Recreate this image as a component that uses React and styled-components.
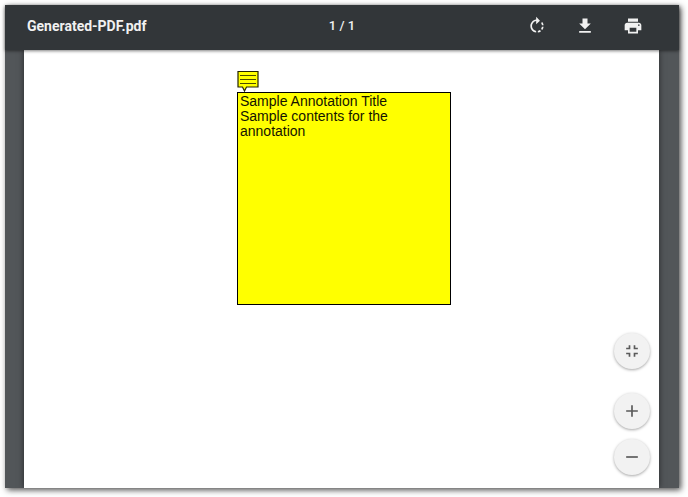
import React from "react";
import styled, { createGlobalStyle } from "styled-components";
import {
  MdRotateRight,
  MdFileDownload,
  MdPrint,
  MdFullscreenExit,
  MdAdd,
  MdRemove,
} from "react-icons/md";

const GlobalStyle = createGlobalStyle`
  *, *::before, *::after { box-sizing: border-box; }
  body {
    margin: 0;
    background: #ffffff;
    font-family: Roboto, "Liberation Sans", sans-serif;
  }
`;

const Viewer = styled.div`
  position: relative;
  display: flex;
  flex-direction: column;
  min-height: calc(100vh - 14px);
  margin: 5px 9px 9px 5px;
  background: #525659;
  box-shadow: 2px 2px 6px rgba(0, 0, 0, 0.7);
`;

const Toolbar = styled.header`
  position: relative;
  z-index: 1;
  display: grid;
  grid-template-columns: 1fr auto 1fr;
  align-items: center;
  height: 45px;
  padding: 0 30px 4px 22px;
  background: #323639;
  color: #f1f1f1;
  box-shadow: 0 1px 3px rgba(0, 0, 0, 0.5);
`;

const FileName = styled.h1`
  margin: 0;
  font-size: 14px;
  line-height: 20px;
  font-weight: 700;
`;

const PageCount = styled.span`
  padding-left: 8px;
  font-size: 13px;
  line-height: 20px;
  font-weight: 500;
`;

const Actions = styled.div`
  display: flex;
  justify-content: flex-end;
  gap: 16px;
`;

const ToolButton = styled.button`
  display: flex;
  align-items: center;
  justify-content: center;
  width: 32px;
  height: 32px;
  padding: 0;
  border: 0;
  background: transparent;
  color: inherit;
  cursor: pointer;
`;

const Body = styled.div`
  flex: 1;
  display: flex;
  flex-direction: column;
  overflow: hidden;
`;

const Page = styled.main`
  flex: 1;
  margin: 0 20px 0 19px;
  padding: 20px 16px 16px 213px;
  background: #ffffff;
  box-shadow: 0 0 6px rgba(0, 0, 0, 0.55);
`;

const NoteIcon = styled.svg`
  display: block;
  width: 22px;
  height: 22px;
`;

const Note = styled.section`
  width: 214px;
  height: 213px;
  padding: 1px 2px;
  border: 1px solid #000000;
  background: #ffff00;
  color: #141400;
  font-family: "Liberation Sans", Arial, sans-serif;
  font-size: 14px;
  line-height: 15px;
`;

const NoteTitle = styled.h2`
  margin: 0;
  font-size: inherit;
  font-weight: 400;
`;

const NoteText = styled.p`
  margin: 0;
  white-space: pre-line;
`;

const ZoomControls = styled.div`
  position: absolute;
  right: 29px;
  bottom: 13px;
  display: flex;
  flex-direction: column;
  gap: 10px;
`;

const RoundButton = styled.button`
  display: flex;
  align-items: center;
  justify-content: center;
  width: 36px;
  height: 36px;
  margin: 0 0 ${({ $apart }) => ($apart ? "14px" : "0")};
  padding: 0;
  border: 0;
  border-radius: 50%;
  background: #f2f2f2;
  color: #5a5a5a;
  box-shadow: 0 1px 3px rgba(0, 0, 0, 0.35);
  cursor: pointer;
`;

export default function App() {
  return (
    <>
      <GlobalStyle />
      <Viewer>
        <Toolbar>
          <FileName>Generated-PDF.pdf</FileName>
          <PageCount>1 / 1</PageCount>
          <Actions>
            <ToolButton type="button" aria-label="Rotate clockwise">
              <MdRotateRight size={20} />
            </ToolButton>
            <ToolButton type="button" aria-label="Download">
              <MdFileDownload size={20} />
            </ToolButton>
            <ToolButton type="button" aria-label="Print">
              <MdPrint size={20} />
            </ToolButton>
          </Actions>
        </Toolbar>
        <Body>
          <Page>
            <NoteIcon viewBox="0 0 22 22" aria-hidden="true">
              <path
                d="M1 1.5H21V17H9.500L7.500 21L5.500 17H1Z"
                fill="#ffff00"
                stroke="#222200"
                strokeWidth="1.2"
              />
              <path
                d="M3 5.500H19M3 9.500H19M3 13.500H19"
                stroke="#4a4a00"
                strokeWidth="1"
              />
            </NoteIcon>
            <Note>
              <NoteTitle>Sample Annotation Title</NoteTitle>
              <NoteText>{"Sample contents for the\nannotation"}</NoteText>
            </Note>
          </Page>
        </Body>
        <ZoomControls>
          <RoundButton type="button" aria-label="Fit to page" $apart>
            <MdFullscreenExit size={20} />
          </RoundButton>
          <RoundButton type="button" aria-label="Zoom in">
            <MdAdd size={20} />
          </RoundButton>
          <RoundButton type="button" aria-label="Zoom out">
            <MdRemove size={20} />
          </RoundButton>
        </ZoomControls>
      </Viewer>
    </>
  );
}
